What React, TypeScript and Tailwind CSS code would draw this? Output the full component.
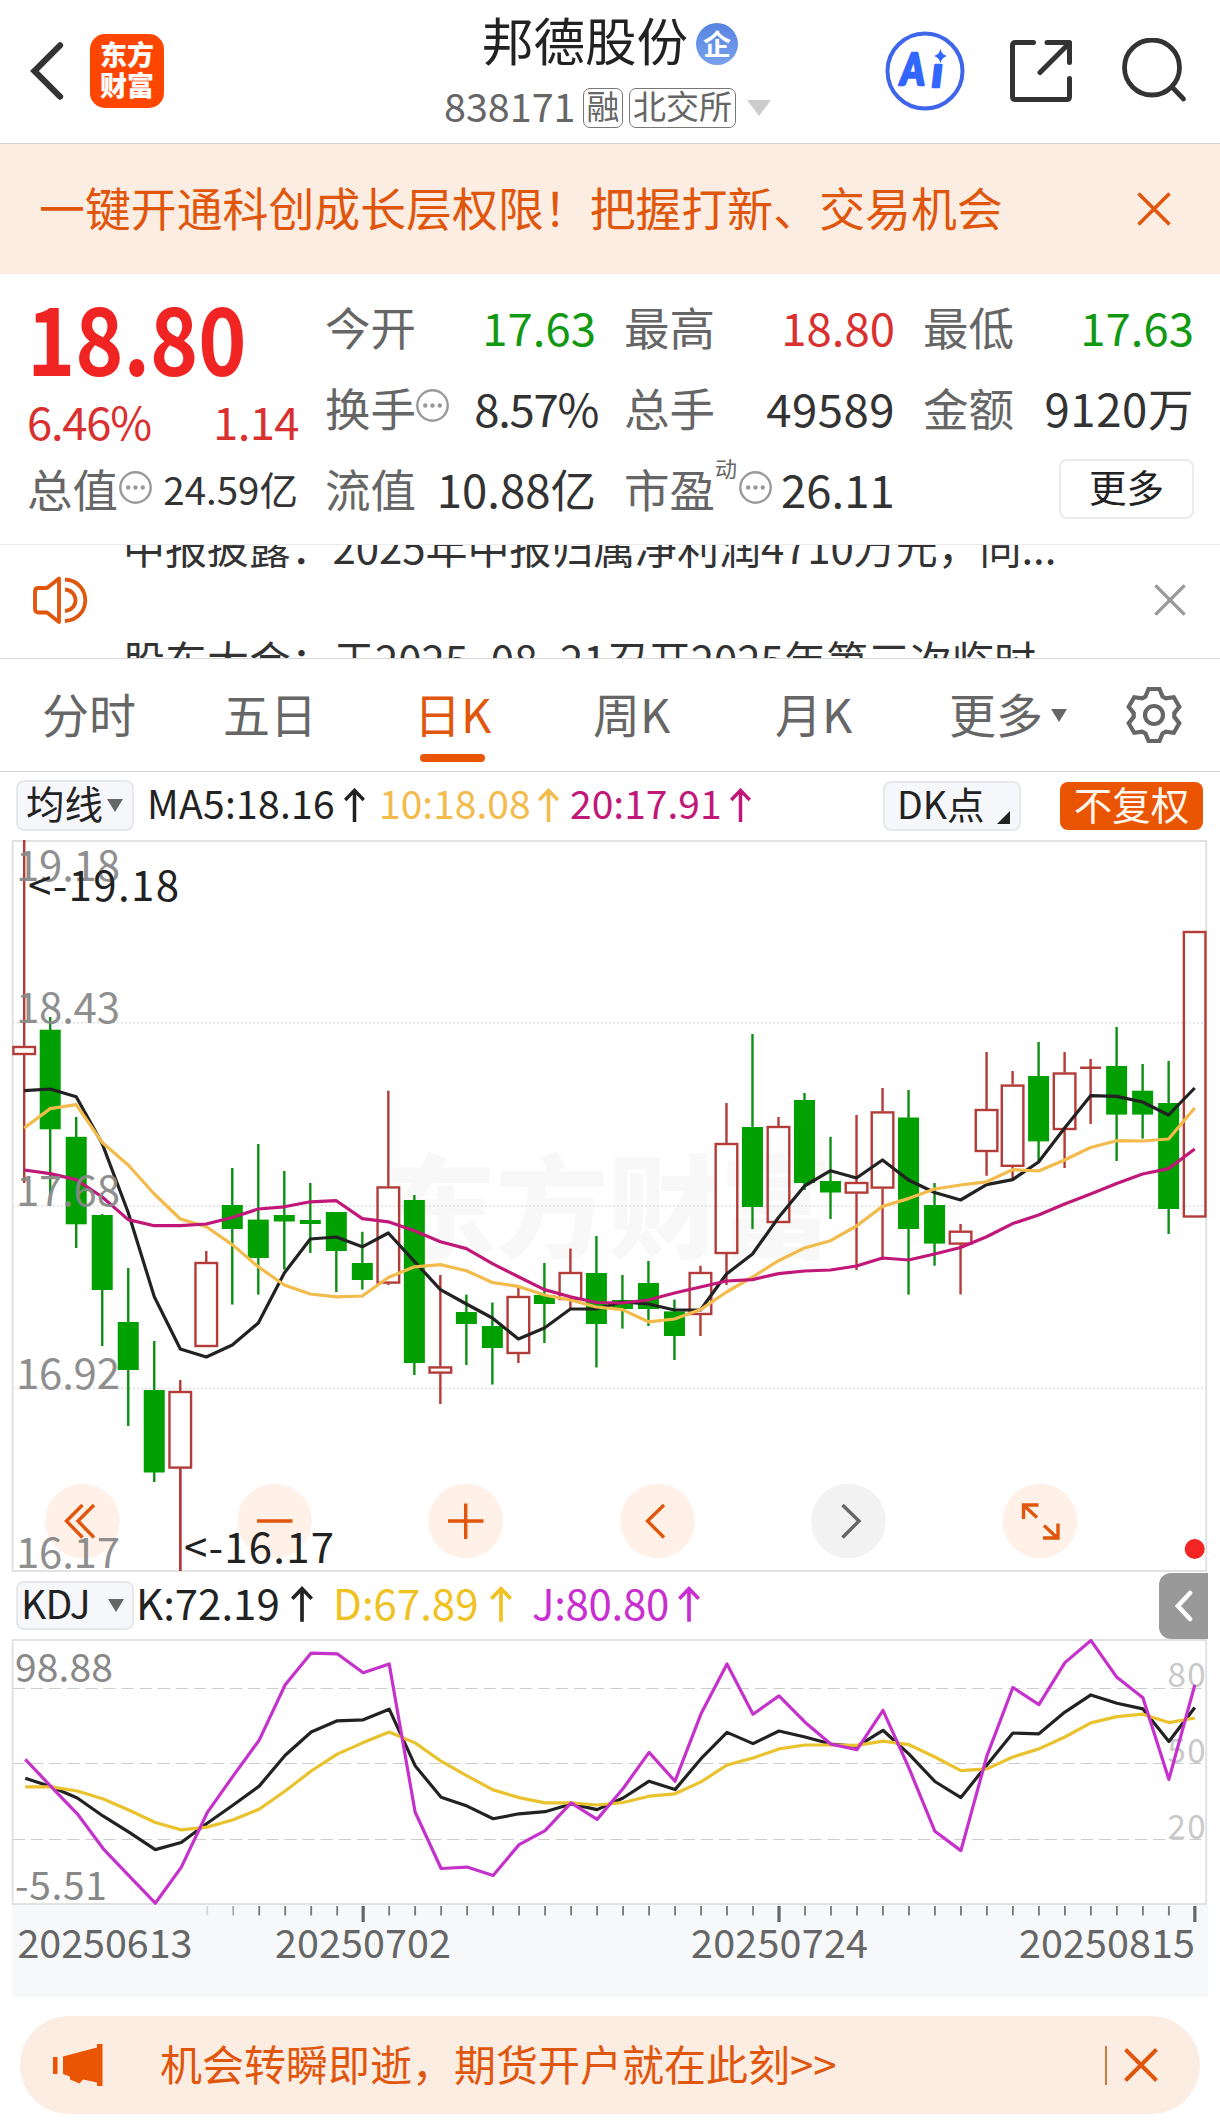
import type { ReactNode } from "react";

const UP = "#b43c38";
const DOWN = "#00a000";
const ACCENT = "#e0560c";

type Candle = [up: 0 | 1, high: number, top: number, bottom: number, low: number];

const candles: Candle[] = [
  [1, 840, 1046, 1055, 1183], [0, 1017, 1029.7, 1129.3, 1194.3], [0, 1117, 1136.8, 1224.3, 1248],
  [0, 1214, 1215, 1290, 1346], [0, 1268, 1322, 1370, 1426], [0, 1341, 1390, 1472.5, 1482],
  [1, 1380, 1391, 1468.6, 1571], [1, 1251, 1262, 1347, 1347], [0, 1168, 1205, 1229, 1304.6],
  [0, 1144, 1219.6, 1258, 1294.6], [0, 1171, 1215, 1221.5, 1269.6], [0, 1183, 1220, 1224, 1253],
  [0, 1212, 1212, 1251, 1292], [0, 1231.8, 1263, 1280, 1289.6], [1, 1090.7, 1186.4, 1283.6, 1285],
  [0, 1195, 1200, 1363, 1375], [1, 1275, 1366.4, 1373.6, 1404], [0, 1294.6, 1312, 1324, 1365],
  [0, 1302.5, 1326, 1348, 1384.6], [1, 1287, 1296, 1354, 1363], [0, 1263, 1295, 1304, 1343],
  [1, 1248.6, 1272, 1300, 1308.6], [0, 1236, 1273, 1324, 1367.5], [0, 1275, 1300, 1309, 1328.6],
  [0, 1261, 1283, 1309, 1326], [0, 1299.6, 1311.4, 1336, 1360], [1, 1265.7, 1272, 1315, 1336],
  [1, 1103, 1143, 1254, 1285], [0, 1034, 1127, 1207, 1229], [1, 1117, 1126, 1223, 1223],
  [0, 1093, 1100, 1183, 1190], [0, 1136.8, 1181, 1192.5, 1219], [1, 1115, 1182, 1193.6, 1270],
  [1, 1088, 1111.4, 1188.6, 1260], [0, 1090, 1117.5, 1229, 1294.6], [0, 1183, 1205, 1243.6, 1265.7],
  [1, 1224, 1230.7, 1244.6, 1294.6], [1, 1052, 1109, 1152, 1175.7], [1, 1071, 1084.6, 1166.8, 1179],
  [0, 1042, 1076, 1141.4, 1161], [1, 1052, 1072.5, 1130, 1168], [1, 1059, 1065.7, 1065.7, 1124],
  [0, 1027, 1066, 1114.6, 1161], [0, 1064, 1090.7, 1114.6, 1138.6], [0, 1061, 1103, 1209, 1234],
  [1, 931, 931, 1217.5, 1217.5],
];

const ma5 = [
  1090.7, 1089, 1096.8, 1143.6, 1212.5, 1296.8, 1349, 1357, 1345, 1323, 1273, 1239, 1237, 1246.8, 1233, 1261.4,
  1289.6, 1304, 1318, 1339, 1328, 1309, 1309, 1302, 1304, 1310, 1310, 1274, 1254, 1217.5, 1186, 1170.7, 1178, 1160,
  1180, 1192.5, 1200, 1184.6, 1179.6, 1162, 1128, 1095.7, 1096.4, 1102, 1115, 1088,
];
const ma10 = [
  1128, 1108.6, 1104.6, 1142.5, 1165, 1194, 1219, 1226.8, 1244.6, 1266.8, 1285, 1294, 1296.8, 1296, 1277.5, 1266.8,
  1264.6, 1270.7, 1282.5, 1286.4, 1295, 1300, 1307, 1309.6, 1321.8, 1319, 1309.6, 1292, 1277, 1260.7, 1248, 1240.7,
  1226, 1206.4, 1198.6, 1189, 1185, 1181.8, 1169.6, 1171, 1160, 1147.5, 1140.7, 1141, 1139, 1108,
];
const ma20 = [
  1170, 1173.6, 1179.6, 1197, 1219.6, 1225.7, 1225.7, 1224, 1217.5, 1209, 1206.8, 1201.8, 1200.7, 1218.6, 1221.8,
  1230.7, 1241.8, 1248.6, 1263.6, 1276.8, 1289.6, 1296.8, 1302.5, 1303, 1300, 1293, 1287, 1281, 1279.6, 1273.6, 1271,
  1270, 1266, 1258, 1260, 1254, 1247.5, 1236.8, 1223.6, 1215, 1204, 1194, 1183.6, 1174, 1168.6, 1149,
];

const kLine = [
  594, 618, 650, 702, 748, 797, 777, 722, 670, 616, 528, 462, 430, 427, 397, 558, 648, 673, 709, 695, 689, 667, 683,
  650, 602, 626, 538, 463, 495, 459, 476, 496, 503, 457, 525, 603, 649, 556, 465, 467, 405, 356, 380, 396, 489, 392,
];
const dLine = [
  618, 618, 630, 653, 685, 720, 741, 733, 712, 682, 630, 573, 525, 492, 462, 493, 545, 587, 627, 649, 664, 664, 670,
  663, 645, 638, 604, 556, 536, 510, 499, 499, 500, 488, 498, 533, 572, 567, 533, 510, 476, 436, 418, 411, 435, 422,
];
const jLine = [
  540, 618, 695, 795, 873, 950, 848, 692, 587, 485, 327, 237, 239, 293, 268, 690, 851, 847, 871, 783, 743, 664, 711,
  623, 520, 602, 410, 268, 411, 359, 434, 497, 512, 400, 565, 745, 800, 530, 335, 384, 264, 201, 306, 364, 597, 328,
];

const candleX = (i: number) => 24.2 + 26.01 * i;
const oscX = (i: number) => 25.3 + 25.99 * i;
const oscY = (v: number) => 1570 + v / 2.851;
const pricePoints = (ys: number[]) => ys.map((y, i) => `${candleX(i).toFixed(1)},${y}`).join(" ");
const oscPoints = (vs: number[]) => vs.map((v, i) => `${oscX(i).toFixed(1)},${oscY(v).toFixed(1)}`).join(" ");

function Cross({ size, className, width = 3.6 }: { size: number; className: string; width?: number }) {
  return (
    <svg width={size} height={size} viewBox="0 0 34 34" fill="none" stroke="currentColor" strokeWidth={width} className={className}>
      <path d="M1.5 1.5 32.5 32.5M32.5 1.5 1.5 32.5" />
    </svg>
  );
}

function Triangle({ className }: { className: string }) {
  return (
    <svg viewBox="0 0 16 13" preserveAspectRatio="none" fill="currentColor" className={className}>
      <path d="M0 0h16L8 13z" />
    </svg>
  );
}

function InfoDots() {
  return (
    <svg width="33" height="33" viewBox="0 0 33 33" className="shrink-0 text-[#999]">
      <circle cx="16.5" cy="16.5" r="15.2" fill="none" stroke="currentColor" strokeWidth="2.4" />
      <circle cx="9.2" cy="16.5" r="2.2" fill="currentColor" />
      <circle cx="16.5" cy="16.5" r="2.2" fill="currentColor" />
      <circle cx="23.8" cy="16.5" r="2.2" fill="currentColor" />
    </svg>
  );
}

function UpArrow({ h, w, className }: { h: number; w: number; className: string }) {
  return (
    <svg width={w} height={h} viewBox="0 0 21 34" fill="none" stroke="currentColor" strokeWidth="3.5" className={`shrink-0 ${className}`}>
      <path d="M10.5 34V3M1.2 12 10.5 2.4 19.8 12" />
    </svg>
  );
}

function Stat({ label, info, value, color = "text-[#333]" }: { label: string; info?: boolean; value: string; color?: string }) {
  return (
    <div className="flex h-[81px] items-center">
      <span className="text-[#666]">{label}</span>
      {info && <span className="mb-[2px]"><InfoDots /></span>}
      <span className={`ml-auto ${color}`}>{value}</span>
    </div>
  );
}

function Header() {
  return (
    <header className="flex h-[144px] items-center border-b border-[#d2d2d2] bg-white pb-[2px]">
      <svg width="36" height="60" viewBox="0 0 36 62" fill="none" stroke="#333" strokeWidth="6.4" strokeLinecap="round" className="ml-[29px]">
        <path d="M31.500 4.500 5 31l26.500 26.500" />
      </svg>
      <div className="ml-[25px] flex h-[74px] w-[74px] flex-col items-center justify-center rounded-[15px] bg-[#ff4600] pb-[3px] text-[27px] leading-[31px] font-black text-white">
        <span>东方</span>
        <span>财富</span>
      </div>
      <div className="ml-[280px] flex h-full w-[330px] flex-col">
        <div className="mt-[11px] ml-[38px] flex h-[56px] items-center">
          <span className="text-[51.500px] leading-none text-[#222]">邦德股份</span>
          <span className="mt-[10px] ml-[8px] flex size-[42px] items-center justify-center rounded-full bg-linear-to-b from-[#5783e2] to-[#78a2ec] pb-[3px] text-[28px] leading-none font-bold text-white">
            企
          </span>
        </div>
        <div className="mt-[21px] flex h-[40px] items-center text-[#666]">
          <span className="w-[139px] pb-[6px] text-[39.500px] leading-none">838171</span>
          <span className="flex h-[40px] w-[40px] items-center justify-center rounded-[7px] border border-[#777] pb-[5px] text-[33px] leading-none">融</span>
          <span className="ml-[6px] flex h-[40px] w-[107px] items-center justify-center rounded-[7px] border border-[#777] pb-[5px] text-[33px] leading-none">北交所</span>
          <Triangle className="ml-[11px] h-[16px] w-[24px] text-[#ccc]" />
        </div>
      </div>
      <svg width="80" height="80" viewBox="0 0 80 80" className="ml-[111px]">
        <circle cx="40" cy="40" r="37.500" fill="none" stroke="#3f66ea" strokeWidth="4" />
        <g fill="#3366ff" stroke="#3366ff" fontFamily="Lato" fontWeight="900" fontStyle="italic" strokeLinejoin="round">
          <text transform="translate(15.500 54) scale(0.84 1)" fontSize="44" strokeWidth="2.600">A</text>
          <text x="47" y="55.500" fontSize="42" strokeWidth="2.600">ı</text>
          <path stroke="none" d="M55.500 18q1.300 5.700 6.500 7-5.200 1.300-6.500 7-1.300-5.700-6.500-7 5.200-1.300 6.500-7z" />
        </g>
      </svg>
      <svg width="64" height="64" viewBox="0 0 64 64" fill="none" stroke="#333" strokeWidth="5" strokeLinecap="round" strokeLinejoin="round" className="ml-[44px]">
        <path d="M24.500 3.500H6.500Q3.500 3.500 3.500 6.500V57.500Q3.500 60.500 6.500 60.500H57.500Q60.500 60.500 60.500 57.500V39.500M38 3.500H60.500V23.500M31 33.500 60 4.500" />
      </svg>
      <svg width="66" height="66" viewBox="0 0 66 66" fill="none" stroke="#333" strokeWidth="4.800" strokeLinecap="round" className="ml-[48px]">
        <circle cx="31" cy="29.500" r="27.500" />
        <path d="M51 49 62.500 61" />
      </svg>
    </header>
  );
}

function Stats() {
  return (
    <section className="flex h-[271px] gap-[28px] border-b border-[#ebebeb] bg-white pt-[12px] pl-[27px] text-[45.500px] leading-none">
      <div className="w-[270px]">
        <div className="flex h-[98px] items-center">
          <span className="inline-block origin-left scale-x-[0.87] text-[94px] font-bold text-[#f12424]">18.80</span>
        </div>
        <div className="flex h-[72px] items-center justify-between pt-[1px] text-[#d93030]">
          <span className="tracking-[-1.300px]">6.46%</span>
          <span className="mr-[-2px] tracking-[-0.600px]">1.14</span>
        </div>
        <div className="flex h-[65px] items-center whitespace-nowrap">
          <span className="text-[#666]">总值</span>
          <span className="mb-[2px] ml-px"><InfoDots /></span>
          <span className="mr-[-1px] ml-auto text-[38.500px] text-[#333]">24.59亿</span>
        </div>
      </div>
      <div className="w-[271px]">
        <Stat label="今开" value="17.63" color="text-[#129912]" />
        <div className="flex h-[81px] items-center">
          <span className="text-[#666]">换手</span>
          <span className="mb-[5px]"><InfoDots /></span>
          <span className="mr-[-2px] ml-auto tracking-[-1.300px] text-[#333]">8.57%</span>
        </div>
        <Stat label="流值" value="10.88亿" />
      </div>
      <div className="w-[271px]">
        <Stat label="最高" value="18.80" color="text-[#d93030]" />
        <div className="flex h-[81px] items-center">
          <span className="text-[#666]">总手</span>
          <span className="ml-auto tracking-[0.500px] text-[#333]">49589</span>
        </div>
        <div className="flex h-[81px] items-center">
          <span className="text-[#666]">市盈</span>
          <span className="mb-[44px] text-[22px] text-[#666]">动</span>
          <span className="mb-[3px] ml-[2px]"><InfoDots /></span>
          <span className="ml-[9px] text-[#333]">26.11</span>
        </div>
      </div>
      <div className="w-[271px]">
        <Stat label="最低" value="17.63" color="text-[#129912]" />
        <div className="flex h-[81px] items-center">
          <span className="text-[#666]">金额</span>
          <span className="ml-auto tracking-[0.600px] text-[#333]">9120万</span>
        </div>
        <div className="flex h-[81px] items-center justify-end">
          <span className="flex h-[60px] w-[135px] items-center justify-center rounded-[8px] border-2 border-[#ebebeb] pb-[6px] text-[37.500px] text-[#222]">更多</span>
        </div>
      </div>
    </section>
  );
}

function News() {
  return (
    <section className="flex h-[114px] items-center overflow-hidden border-b border-[#d8d8d8] bg-white">
      <svg width="56" height="50" viewBox="0 0 56 50" fill="none" stroke={ACCENT} strokeWidth="3.800" strokeLinejoin="round" className="mt-[-3px] ml-[32px] shrink-0">
        <path d="M27 3.500V47L15 37.500H6.500Q3 37.500 3 34V16.500Q3 13 6.500 13H15z" />
        <path d="M33 4.500C60 6 60 44.500 33 46M33 14.500C47 15.500 47 35 33 36" />
      </svg>
      <div className="ml-[35px] h-[226px] w-[1000px] text-[42px] leading-[113px] whitespace-nowrap text-[#333]">
        <div className="h-[113px] tracking-[-0.080px]">中报披露：2025年中报归属净利润4710万元，同...</div>
        <div className="h-[113px]">
          股东大会：于2025<span className="px-[4px]">-</span>08<span className="px-[4px]">-</span>21召开2025年第三次临时
        </div>
      </div>
      <Cross size={32} className="mt-[-3px] ml-[31px] shrink-0 text-[#999]" />
    </section>
  );
}

function Tab({ children, className }: { children: ReactNode; className: string }) {
  return <span className={`whitespace-nowrap ${className}`}>{children}</span>;
}

function Tabs() {
  const gear = Array.from({ length: 6 }, (_, k) => {
    const a = (k * Math.PI) / 3;
    return [[-8.5, -18.5], [-5.5, -26], [5.5, -26], [8.5, -18.5]]
      .map(([x, y]) => `${(x * Math.cos(a) - y * Math.sin(a)).toFixed(1)},${(x * Math.sin(a) + y * Math.cos(a)).toFixed(1)}`)
      .join(" ");
  }).join(" ");
  return (
    <nav className="flex h-[113px] items-center border-b border-[#d2d2d2] bg-white text-[47px] leading-none text-[#666]">
      <Tab className="ml-[42px] w-[181px] pb-[6px]">分时</Tab>
      <Tab className="w-[191px] pb-[6px]">五日</Tab>
      <div className="relative w-[179px] pb-[6px] text-[#e0560c]">
        日K
        <span className="absolute top-[65px] left-[6px] h-[8px] w-[65px] rounded-full bg-[#ea5504]" />
      </div>
      <Tab className="w-[182px] pb-[6px]">周K</Tab>
      <Tab className="w-[174px] pb-[6px]">月K</Tab>
      <Tab className="w-[102px] pb-[6px]">更多</Tab>
      <Triangle className="h-[13px] w-[16px]" />
      <svg width="60" height="60" viewBox="-30 -30 60 60" fill="none" stroke="#666" strokeWidth="4.200" className="ml-[57px]">
        <polygon points={gear} />
        <circle r="9" />
      </svg>
    </nav>
  );
}

function MaRow() {
  return (
    <div className="flex h-[68px] items-center bg-white pl-[16px] text-[39px] leading-none whitespace-nowrap">
      <div className="mt-[-2px] flex h-[51px] w-[118px] items-center rounded-[8px] border-2 border-[#e6e8ec] bg-[#f6f7fa] pl-[8px]">
        <span className="pb-[5px] text-[38.500px] text-[#222]">均线</span>
        <Triangle className="ml-[4px] h-[13px] w-[16px] text-[#666]" />
      </div>
      <div className="ml-[13px] flex w-[232px] items-center pb-[7px] tracking-[0.300px] text-[#222]">
        MA5:18.16
        <UpArrow w={21} h={34} className="mt-[4px] ml-[9px]" />
      </div>
      <div className="flex w-[191px] items-center pb-[7px] text-[#f2bb4c]">
        10:18.08
        <UpArrow w={21} h={34} className="mt-[4px] ml-[7px]" />
      </div>
      <div className="flex w-[313px] items-center pb-[7px] text-[#c01778]">
        20:17.91
        <UpArrow w={21} h={34} className="mt-[4px] ml-[8px]" />
      </div>
      <div className="flex h-[50px] w-[138px] items-center rounded-[8px] border-2 border-[#e6e8ec] bg-[#f6f7fa] pl-[12px] text-[37.500px] text-[#222]">
        <span className="pb-[6px]">DK点</span>
        <svg width="13" height="13" viewBox="0 0 13 13" className="mt-[22px] ml-[12px] shrink-0">
          <path d="M13 0V13H0z" fill="#222" />
        </svg>
      </div>
      <div className="ml-[39px] flex h-[48px] w-[143px] items-center justify-center rounded-[8px] bg-[#ea5504] pb-[5px] text-[38.500px] text-[#fff6ee]">不复权</div>
    </div>
  );
}

function PriceChart() {
  const buttons = [82.5, 274.6, 465.7, 657.5, 848.5, 1040];
  return (
    <svg width="1220" height="732" viewBox="0 840 1220 732" className="block bg-white">
      <text x="384" y="1250" fontSize="112" fontWeight="900" fill="#f8f8f8">东方财富</text>
      <g stroke="#e0e0e0" strokeWidth="1.500" strokeDasharray="2 2">
        <path d="M13 1022.700H1207M13 1206H1207M13 1388.600H1207" />
      </g>
      <rect x="12.700" y="841" width="1193.500" height="730" fill="none" stroke="#e2e2e2" strokeWidth="2" />
      {candles.map(([up, high, top, bottom, low], i) => {
        const x = candleX(i);
        if (up) {
          return (
            <g key={i} stroke={UP} strokeWidth="2.400" fill="none">
              {top === bottom ? (
                <path d={`M${x - 10.5} ${top + 2}H${x + 10.5}M${x} ${high}V${low}`} />
              ) : (
                <>
                  <path d={`M${x} ${high}V${top}M${x} ${bottom}V${low}`} />
                  <rect x={x - 10.8} y={top + 1} width="21.600" height={bottom - top - 2} />
                </>
              )}
            </g>
          );
        }
        return (
          <g key={i}>
            <path d={`M${x} ${high}V${low}`} stroke="#0d8f14" strokeWidth="2.400" />
            <rect x={x - 10.5} y={top} width="21" height={bottom - top} fill={DOWN} />
          </g>
        );
      })}
      <g fill="none" strokeWidth="3.200" strokeLinejoin="round">
        <polyline points={pricePoints(ma5)} stroke="#222" />
        <polyline points={pricePoints(ma10)} stroke="#f2bb4c" />
        <polyline points={pricePoints(ma20)} stroke="#c01778" />
      </g>
      {buttons.map((x, i) => (
        <circle key={x} cx={x} cy="1521" r="37.300" fill={i === 4 ? "#f2f2f2" : "#fff1e8"} />
      ))}
      <g fill="none" stroke={ACCENT} strokeWidth="3.400">
        <path d="M82.500 1505 66.500 1521 82.500 1537.500M94 1505 78 1521 94 1537.500" />
        <path d="M257 1521H292.500M448 1521H483.500M465.700 1503.500V1539" />
        <path d="M664 1505 647.500 1521 664 1537.500" />
        <path d="M1023.500 1519V1505H1038.500M1024 1505.500 1037 1517.500M1044 1525.500 1057.500 1538M1058 1523.500V1538H1043" />
        <path d="M842.500 1505 859 1521 842.500 1537.500" stroke="#666" />
      </g>
      <path d="M180.260 1468V1571" stroke={UP} strokeWidth="2.400" />
      <circle cx="1194.700" cy="1549" r="10" fill="#f22424" />
      <g fontSize="42" fill="#888" fillOpacity="0.95">
        <text x="16" y="881" textLength="104">19.18</text>
        <text x="16" y="1023" textLength="104">18.43</text>
        <text x="16" y="1206" textLength="104">17.68</text>
        <text x="16" y="1388.500" textLength="104">16.92</text>
        <text x="16" y="1567.500" textLength="104">16.17</text>
      </g>
      <g fontSize="42" fill="#222">
        <text x="28" y="900.500" textLength="151">{"<-19.18"}</text>
        <text x="184" y="1563" textLength="150">{"<-16.17"}</text>
      </g>
    </svg>
  );
}

function KdjRow() {
  return (
    <div className="flex h-[67px] items-center bg-white pl-[16px] text-[42px] leading-none whitespace-nowrap">
      <div className="flex h-[49px] w-[118px] items-center rounded-[8px] border-2 border-[#e6e8ec] bg-[#f6f7fa] pl-[3px] text-[#222]">
        <span className="w-[87px] pb-[6px] text-[39px] tracking-[-0.800px]">KDJ</span>
        <Triangle className="h-[13px] w-[16px] text-[#666]" />
      </div>
      <div className="ml-[2px] flex w-[197px] items-center pb-[7px] text-[#222]">
        K:72.19
        <UpArrow w={22} h={36} className="mt-[4px] ml-[11px]" />
      </div>
      <div className="flex w-[199px] items-center pb-[7px] text-[#efc21f]">
        D:67.89
        <UpArrow w={22} h={36} className="mt-[4px] ml-[11px]" />
      </div>
      <div className="flex w-[627px] items-center pb-[7px] text-[#c92fd0]">
        <span className="tracking-[-0.300px]">J:80.80</span>
        <UpArrow w={22} h={36} className="mt-[4px] ml-[9px]" />
      </div>
      <div className="flex h-[66px] w-[49px] items-center justify-center rounded-l-[12px] bg-[#999]">
        <svg width="19" height="32" viewBox="0 0 19 32" fill="none" stroke="#fff" strokeWidth="4.600" strokeLinecap="round">
          <path d="M16 3 4 16 16 29" />
        </svg>
      </div>
    </div>
  );
}

function KdjChart() {
  return (
    <svg width="1220" height="266" viewBox="0 1639 1220 266" className="block bg-white">
      <g stroke="#ccc" strokeWidth="1.200" strokeDasharray="12 6.100">
        <path d="M13 1688.500H1207M13 1763.500H1207M13 1839.500H1207" />
      </g>
      <rect x="12.700" y="1640" width="1193.500" height="264" fill="none" stroke="#e2e2e2" strokeWidth="2" />
      <g fontSize="33" fill="#c9c9c9">
        <text x="1167.500" y="1687" textLength="38">80</text>
        <text x="1167.500" y="1763" textLength="38">50</text>
        <text x="1167.500" y="1838.500" textLength="38">20</text>
      </g>
      <g fontSize="39" fill="#888">
        <text x="15" y="1681.500" textLength="98">98.88</text>
        <text x="15" y="1899.500" textLength="92">-5.51</text>
      </g>
      <g fill="none" strokeWidth="3.200" strokeLinejoin="round">
        <polyline points={oscPoints(kLine)} stroke="#222" />
        <polyline points={oscPoints(dLine)} stroke="#e9c22e" />
        <polyline points={oscPoints(jLine)} stroke="#c531cb" />
      </g>
    </svg>
  );
}

function DateAxis() {
  const ticks = Array.from({ length: 39 }, (_, n) => n + 7);
  return (
    <div className="ml-[12px] w-[1196px] bg-[#f7f8fa]">
      <svg width="1196" height="92" viewBox="12 1905 1196 92" className="block">
        {ticks.map((i) => {
          const major = i === 13 || i === 29 || i === 45;
          return (
            <path
              key={i}
              d={`M${oscX(i)} 1906V${major ? 1922 : 1915.5}`}
              stroke={major ? "#666" : "#777"}
              strokeWidth={major ? 3.2 : 1.8}
              opacity={i === 7 ? 0.25 : i === 8 ? 0.6 : 1}
            />
          );
        })}
        <g fontSize="39.500" fill="#666">
          <text x="17.500" y="1958" textLength="175">20250613</text>
          <text x="275" y="1958" textLength="176">20250702</text>
          <text x="691" y="1958" textLength="177">20250724</text>
          <text x="1019" y="1958" textLength="176">20250815</text>
        </g>
      </svg>
    </div>
  );
}

export default function App() {
  return (
    <main className="h-[2120px] w-[1220px] overflow-hidden bg-white font-['Noto_Sans_CJK_SC',sans-serif]">
      <Header />
      <section className="flex h-[130px] items-center bg-[#fcede3] pl-[39px] text-[#e0560c]">
        <span className="w-[1098px] pb-[4px] text-[45.900px] leading-none">一键开通科创成长层权限！把握打新、交易机会</span>
        <Cross size={34} className="" />
      </section>
      <Stats />
      <News />
      <Tabs />
      <MaRow />
      <PriceChart />
      <KdjRow />
      <KdjChart />
      <DateAxis />
      <section className="mt-[19px] ml-[20px] flex h-[98px] w-[1180px] items-center rounded-full bg-[#fcede3] text-[#e0560c]">
        <svg width="50" height="42" viewBox="0 0 50 42" fill="#ea5504" className="ml-[33px]">
          <path d="M0 13H4.500V30H0zM10 12.500 44 3.500V0H49.500V42H44V38.500L30 35.500 26.500 39.500 17 35.500V32.500L10 30z" />
        </svg>
        <span className="ml-[57px] w-[945px] pb-[5px] text-[42px] leading-none whitespace-nowrap">机会转瞬即逝，期货开户就在此刻&gt;&gt;</span>
        <span className="h-[39px] w-[1.500px] shrink-0 bg-[#cf7a3e]" />
        <Cross size={34} className="ml-[17px]" width={4} />
      </section>
    </main>
  );
}
